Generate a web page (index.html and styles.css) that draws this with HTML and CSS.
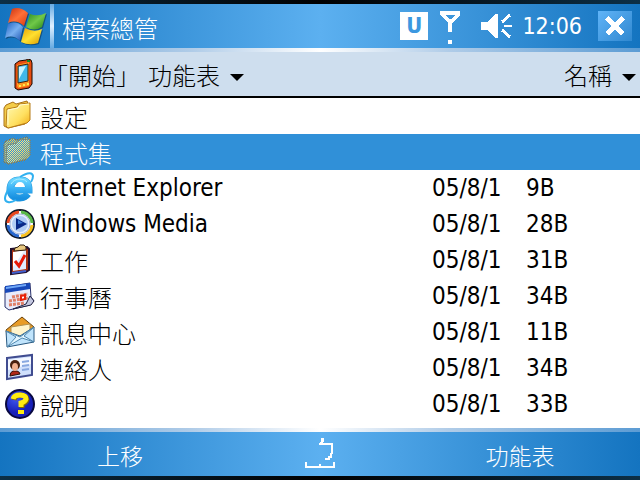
FILE: index.html
```html
<!DOCTYPE html>
<html lang="zh-Hant">
<head>
    <meta charset="UTF-8">
    <meta name="viewport" content="width=device-width, initial-scale=1.0">
    <title>檔案總管</title>
    <link rel="stylesheet" href="styles.css">
</head>
<body>
    <header class="titlebar">
        <button class="start" aria-label="開始">
            <svg width="44" height="40" viewBox="4 6 44 40">
                <defs>
                    <linearGradient id="red" x1="0" y1="0" x2="1" y2="1"><stop offset="0" stop-color="#c83010"/><stop offset=".5" stop-color="#ff7038"/><stop offset="1" stop-color="#d83810"/></linearGradient>
                    <linearGradient id="green" x1="0" y1="0" x2="1" y2="1"><stop offset="0" stop-color="#288820"/><stop offset=".5" stop-color="#70c848"/><stop offset="1" stop-color="#208018"/></linearGradient>
                    <linearGradient id="blue" x1="0" y1="0" x2="1" y2="1"><stop offset="0" stop-color="#2060c0"/><stop offset=".5" stop-color="#78b0f0"/><stop offset="1" stop-color="#1850b0"/></linearGradient>
                    <linearGradient id="yellow" x1="0" y1="0" x2="1" y2="1"><stop offset="0" stop-color="#e8a000"/><stop offset=".5" stop-color="#ffe030"/><stop offset="1" stop-color="#d89800"/></linearGradient>
                </defs>
                <g opacity=".35" transform="translate(1 1)">
                    <path d="M12 9Q20 6 28 13L24 26Q16 19 8 23Z M30 14Q38 17 46 13L42 27Q34 32 26 27Z M8 24Q16 20 23 27L20 41Q13 34 5 38Z M25 28Q34 33 42 29L38 43Q29 46 21 42Z"/>
                </g>
                <path fill="url(#red)" d="M12 9Q20 6 28 13L24 26Q16 19 8 23Z"/>
                <path fill="url(#green)" d="M30 14Q38 17 46 13L42 27Q34 32 26 27Z"/>
                <path fill="url(#blue)" d="M8 24Q16 20 23 27L20 41Q13 34 5 38Z"/>
                <path fill="url(#yellow)" d="M25 28Q34 33 42 29L38 43Q29 46 21 42Z"/>
            </svg>
        </button>
        <h1 class="title">檔案總管</h1>
        <div class="status">
            <span class="ime">U</span>
            <svg width="20" height="36" viewBox="0 0 20 36" shape-rendering="crispEdges" aria-hidden="true">
                <path fill="#fff" fill-rule="evenodd" d="M0 3H20V7L12 15V24H8V15L0 7ZM5 7L9 11H11L15 7Z"/>
                <path fill="#fff" d="M8 32H12V36H8Z"/>
            </svg>
            <svg class="speaker" width="32" height="28" viewBox="0 0 32 28" shape-rendering="crispEdges" aria-hidden="true">
                <path fill="#fff" d="M1 10H8L15 2H18V26H15L8 18H1Z"/>
                <path stroke="#fff" stroke-width="3" d="M22 10L30 3M22 18L30 25"/>
                <path stroke="#fff" stroke-width="2" d="M24 14H32"/>
            </svg>
            <time class="clock">12:06</time>
            <button class="close" aria-label="關閉">
                <svg width="20" height="20" viewBox="0 0 20 20" shape-rendering="crispEdges">
                    <path stroke="#fff" stroke-width="5" d="M2 2L18 18M18 2L2 18"/>
                </svg>
            </button>
        </div>
    </header>

    <nav class="pathbar">
        <button class="drop">
            <svg width="20" height="32" viewBox="0 0 20 32" aria-hidden="true">
                <path fill="#e84c10" stroke="#180800" d="M1 5L5 2L12 1L14 0L17 1L18 4V25L15 29L4 31L1 29Z"/>
                <path fill="#ff9820" d="M3 6L15 3V27L4 29L3 27Z"/>
                <path fill="#40b8e8" stroke="#482008" d="M4 7L14 5V22L4 24Z"/>
                <path fill="#c8f4ff" d="M5 8L12 7L5 20Z"/>
                <path fill="#ffe850" d="M5 26h2v2H5zM9 25h2v2H9zM13 24h2v2h-2z"/>
                <path fill="#108828" d="M13 1h3v2h-3z"/>
            </svg>
            <span class="place">「開始」<span class="menu-name">功能表</span></span>
            <span class="arrow"></span>
        </button>
        <button class="drop">名稱<span class="arrow"></span></button>
    </nav>

    <main class="list">
        <table class="files">
            <colgroup><col><col class="col-date"><col class="col-size"></colgroup>
            <tbody>
                <tr>
                    <td><a href="#" class="file zh">
                        <svg width="32" height="32" viewBox="0 0 32 32" aria-hidden="true">
                            <defs><linearGradient id="folder" x1="0" y1="0" x2="1" y2="1"><stop offset="0" stop-color="#fffbb8"/><stop offset=".6" stop-color="#ffe060"/><stop offset="1" stop-color="#f0a810"/></linearGradient></defs>
                            <path fill="#f4cc48" stroke="#a87018" d="M1 8L3 5L10 2L13 4L24 1L25 4V21L22 24L5 28L1 26Z"/>
                            <path fill="url(#folder)" stroke="#b87c18" d="M4 9L14 7L16 4L27 3V20L24 23L5 28L3 26Z"/>
                            <path fill="none" stroke="#fffbd0" d="M5 25V10L15 8L17 5L26 4"/>
                        </svg><span>設定</span></a></td>
                    <td></td>
                    <td></td>
                </tr>
                <tr class="selected">
                    <td><a href="#" class="file zh">
                        <svg width="32" height="32" viewBox="0 0 32 32" aria-hidden="true">
                            <defs><pattern id="dither" width="2" height="2" patternUnits="userSpaceOnUse"><path fill="#3090d8" d="M0 0h1v1H0zM1 1h1v1H1z"/></pattern></defs>
                            <path fill="#f4cc48" stroke="#a87018" d="M1 8L3 5L10 2L13 4L24 1L25 4V21L22 24L5 28L1 26Z"/>
                            <path fill="url(#folder)" stroke="#b87c18" d="M4 9L14 7L16 4L27 3V20L24 23L5 28L3 26Z"/>
                            <path fill="url(#dither)" shape-rendering="crispEdges" d="M0 0H32V32H0Z"/>
                        </svg><span>程式集</span></a></td>
                    <td></td>
                    <td></td>
                </tr>
                <tr>
                    <td><a href="#" class="file">
                        <svg width="32" height="32" viewBox="0 0 32 32" aria-hidden="true">
                            <defs><linearGradient id="ie" x1="0" y1="0" x2="0" y2="1"><stop offset="0" stop-color="#68d4ff"/><stop offset=".5" stop-color="#38b0f4"/><stop offset="1" stop-color="#1890e0"/></linearGradient></defs>
                            <path fill="none" stroke="#289cdc" stroke-width="7" d="M9 18H26Q26 8 17 8Q7 8 7 18Q8 26 17 26Q22 26 25 22"/>
                            <path fill="none" stroke="url(#ie)" stroke-width="6" d="M10 18H26Q26 8 17 8Q7 8 7 18Q8 26 17 26Q22 26 25 22"/>
                            <path fill="#fff" d="M12 15Q13 10 17 10Q21 10 22 15Z"/>
                            <path fill="none" stroke="#30b0f0" stroke-width="2" d="M17 5Q29 -2 30 4Q30 7 28 10M5 18Q-1 29 5 30Q8 31 13 28"/>
                            <path fill="none" stroke="#a8ecff" d="M8 12Q11 7 17 7Q22 7 24 10"/>
                        </svg><span>Internet Explorer</span></a></td>
                    <td>05/8/1</td>
                    <td>9B</td>
                </tr>
                <tr>
                    <td><a href="#" class="file">
                        <svg width="32" height="32" viewBox="0 0 32 32" aria-hidden="true">
                            <circle cx="17" cy="16" r="14" fill="#fff" stroke="#101828" stroke-width="2"/>
                            <g fill="none" stroke-width="3">
                                <path stroke="#e84820" d="M5 15A12 12 0 0 1 16 4"/>
                                <path stroke="#58b848" d="M18 4A12 12 0 0 1 29 15"/>
                                <path stroke="#f8c020" d="M29 17A12 12 0 0 1 18 28"/>
                                <path stroke="#2868d0" d="M16 28A12 12 0 0 1 5 17"/>
                            </g>
                            <circle cx="17" cy="16" r="10" fill="#e8f0fc" stroke="#a8b8d8"/>
                            <circle cx="17" cy="16" r="8" fill="#b0ccf4"/>
                            <path fill="#082888" d="M13 10L24 16L13 22Z"/>
                            <path fill="#3878d0" d="M15 12L20 15L15 16Z"/>
                        </svg><span>Windows Media</span></a></td>
                    <td>05/8/1</td>
                    <td>28B</td>
                </tr>
                <tr>
                    <td><a href="#" class="file zh">
                        <svg width="32" height="32" viewBox="0 0 32 32" aria-hidden="true">
                            <path fill="#a83010" stroke="#201030" stroke-width="2" d="M8 5L24 3L26 5V26L23 28L8 30Z"/>
                            <path fill="#e0ecff" d="M10 8L23 6V25L10 27Z"/>
                            <path fill="#fff" d="M10 8L21 7L10 23Z"/>
                            <path fill="#e8c880" stroke="#302010" d="M11 7L12 4L15 3L17 1H21L23 3V6Z"/>
                            <path fill="none" stroke="#e81808" stroke-width="3" d="M12 17L16 22L22 11"/>
                            <path stroke="#4060d0" stroke-width="2" d="M9 29L23 27"/>
                        </svg><span>工作</span></a></td>
                    <td>05/8/1</td>
                    <td>31B</td>
                </tr>
                <tr>
                    <td><a href="#" class="file zh">
                        <svg width="32" height="32" viewBox="0 0 32 32" aria-hidden="true">
                            <path fill="#e8ecfc" stroke="#28306c" d="M2 7L27 3L28 17L31 21L27 25L6 30L2 27Z"/>
                            <path fill="#c4c8e0" stroke="#202040" d="M27 16L31 21L28 25L10 29L23 24Z"/>
                            <path fill="#1848b8" d="M2 6L27 3V9L2 13Z"/>
                            <path fill="#70a8f8" d="M3 7L23 4V6L3 9Z"/>
                            <path stroke="#e08068" stroke-width="3" stroke-dasharray="3 1" d="M9 17L25 14M6 21L25 18M6 25L21 23"/>
                            <path fill="#fff" stroke="#e82008" stroke-width="2" d="M18 16L22 15V19L18 20Z"/>
                        </svg><span>行事曆</span></a></td>
                    <td>05/8/1</td>
                    <td>34B</td>
                </tr>
                <tr>
                    <td><a href="#" class="file zh">
                        <svg width="32" height="32" viewBox="0 0 32 32" aria-hidden="true">
                            <path fill="#e89c28" stroke="#684008" d="M3 14L19 1L31 11L29 14L4 19Z"/>
                            <path fill="#fff4cc" stroke="#b09050" d="M8 11L27 8V18L14 23L8 21Z"/>
                            <path fill="#c0e4fc" stroke="#285880" d="M3 15L17 20L31 11V26L4 31Z"/>
                            <path fill="#e4f6ff" stroke="#5088b0" d="M3 15L17 21L31 11L21 20L31 26L19 22L4 31L13 21Z"/>
                        </svg><span>訊息中心</span></a></td>
                    <td>05/8/1</td>
                    <td>11B</td>
                </tr>
                <tr>
                    <td><a href="#" class="file zh">
                        <svg width="32" height="32" viewBox="0 0 32 32" aria-hidden="true">
                            <path fill="#d0e0fc" stroke="#404c90" stroke-width="2" d="M4 6L29 3V23L4 27Z"/>
                            <path fill="#f4f8ff" d="M5 8L28 5V12L5 18Z"/>
                            <path fill="#b02818" stroke="#301008" d="M7 24Q7 20 10 19H14Q17 20 17 22Z"/>
                            <circle cx="12" cy="13" r="5" fill="#482010"/>
                            <ellipse cx="12" cy="15" rx="3" ry="4" fill="#f0b090"/>
                            <path stroke="#88a8e0" stroke-width="2" d="M19 10L26 9M19 14L26 13M19 18L26 17"/>
                        </svg><span>連絡人</span></a></td>
                    <td>05/8/1</td>
                    <td>34B</td>
                </tr>
                <tr>
                    <td><a href="#" class="file zh">
                        <svg width="32" height="32" viewBox="0 0 32 32" aria-hidden="true">
                            <defs><radialGradient id="help" cx=".35" cy=".3"><stop offset="0" stop-color="#4058f0"/><stop offset="1" stop-color="#1820b8"/></radialGradient></defs>
                            <circle cx="17" cy="16" r="14" fill="url(#help)" stroke="#080840" stroke-width="2"/>
                            <path fill="none" stroke="#806800" stroke-width="5" d="M11 12Q12 7 18 7Q24 8 24 12Q23 15 19 16V20"/>
                            <path fill="none" stroke="#ffec10" stroke-width="5" d="M10 11Q11 7 17 7Q23 7 23 11Q22 14 18 15V19"/>
                            <path fill="#ffec10" d="M15 22h6v4h-6z"/>
                        </svg><span>說明</span></a></td>
                    <td>05/8/1</td>
                    <td>33B</td>
                </tr>
            </tbody>
        </table>
    </main>

    <footer class="softkeys">
        <button class="key">上移</button>
        <button class="sip" aria-label="輸入面板">
            <svg width="30" height="32" viewBox="0 0 30 32" shape-rendering="crispEdges">
                <path fill="#fff" d="M16 0H19V3L17 5H28V16H27V20H25V22H20V20H23V18H25V15H26V7H14V5L16 3Z"/>
                <path fill="#fff" d="M0 24H2V28H14V26H16V28H28V24H30V30H0Z"/>
            </svg>
        </button>
        <button class="key">功能表</button>
    </footer>
</body>
</html>
```
FILE: styles.css
```css
* { box-sizing: border-box; margin: 0; padding: 0; }
body {
    min-height: 100vh; display: flex; flex-direction: column;
    font-family: "DejaVu Sans Condensed", "DejaVu Sans", "Noto Sans CJK TC", sans-serif;
    font-size: 24px; line-height: 36px;
    background: #fff; color: #000;
}
button { font: inherit; color: inherit; background: none; border: none; cursor: pointer; }
svg { display: block; flex: none; }

/* blue bars */
.titlebar, .softkeys {
    display: flex; align-items: center; color: #fff; position: relative;
    background: linear-gradient(to right, #1474c0, #5cb0f0 50%, #1474c0);
    border-style: solid; border-width: 4px 0;
}
.titlebar {
    height: 52px;
    border-image: linear-gradient(to right, #0c3048, #000 50%, #0c3048) 4;
    border-bottom: none;
}
.titlebar::after, .softkeys::before {
    content: ""; position: absolute; left: 0; right: 0; height: 4px;
    background: linear-gradient(to right, #5c9cd4, #b0cce8 30%, #fff 50%, #b0cce8 70%, #5c9cd4);
}
.titlebar::after { bottom: 0; }
.start { padding: 0 2px 4px 4px; height: 44px; }
.title {
    height: 44px; align-self: flex-start; padding-left: 8px; border-left: 4px solid;
    border-image: linear-gradient(#4c9cdc, #e0f0ff 50%, #4c9cdc) 4;
    font-family: "Noto Sans CJK TC", sans-serif;
    font-size: 24px; font-weight: 300; line-height: 48px;
}
.status { display: flex; align-items: center; gap: 12px; margin-left: auto; padding: 0 8px 4px 0; }
.ime {
    width: 28px; height: 28px; background: #fff; color: #3c98e0;
    font-weight: bold; font-size: 22px; line-height: 28px; text-align: center;
}
.speaker { margin-left: 8px; }
.clock { font-size: 23px; margin-left: -2px; }
.close {
    width: 34px; height: 30px; margin-left: 4px; display: flex; align-items: center; justify-content: center;
    background: linear-gradient(135deg, #60b4f8, #3088d0);
}

.pathbar {
    height: 46px; display: flex; justify-content: space-between; align-items: center;
    padding: 2px 4px 0 14px; background: #cedeee; border-bottom: 2px solid #000;
}
.drop {
    display: flex; align-items: center; gap: 10px;
    font-family: "Noto Sans CJK TC", sans-serif; font-size: 24px; font-weight: 300;
}
.menu-name { margin-left: 8px; }
.arrow { border: 7px solid transparent; border-top-color: #000; border-bottom: none; margin-top: 4px; }

/* file list */
.list { flex: 1; }
.files { width: 100%; table-layout: fixed; border-collapse: collapse; }
.files tr { height: 36px; }
.files td { white-space: nowrap; }
.col-date { width: 94px; }
.col-size { width: 114px; }
.file {
    display: flex; align-items: center; gap: 5px; padding-left: 3px; height: 36px;
    color: inherit; text-decoration: none;
}
.zh { font-family: "Noto Sans CJK TC", sans-serif; font-weight: 300; }
.zh span { padding-top: 2px; }
.selected { background: #3090d8; color: #fff; }

.softkeys {
    height: 52px; border-top: none; padding-top: 4px;
    border-image: linear-gradient(to right, #0c3048, #000 50%, #0c3048) 4;
    font-family: "Noto Sans CJK TC", sans-serif; font-size: 23px; font-weight: 300;
}
.softkeys::before { top: 0; }
.key { flex: 1; padding-top: 2px; }
.sip { width: 25%; display: flex; justify-content: center; }
```
